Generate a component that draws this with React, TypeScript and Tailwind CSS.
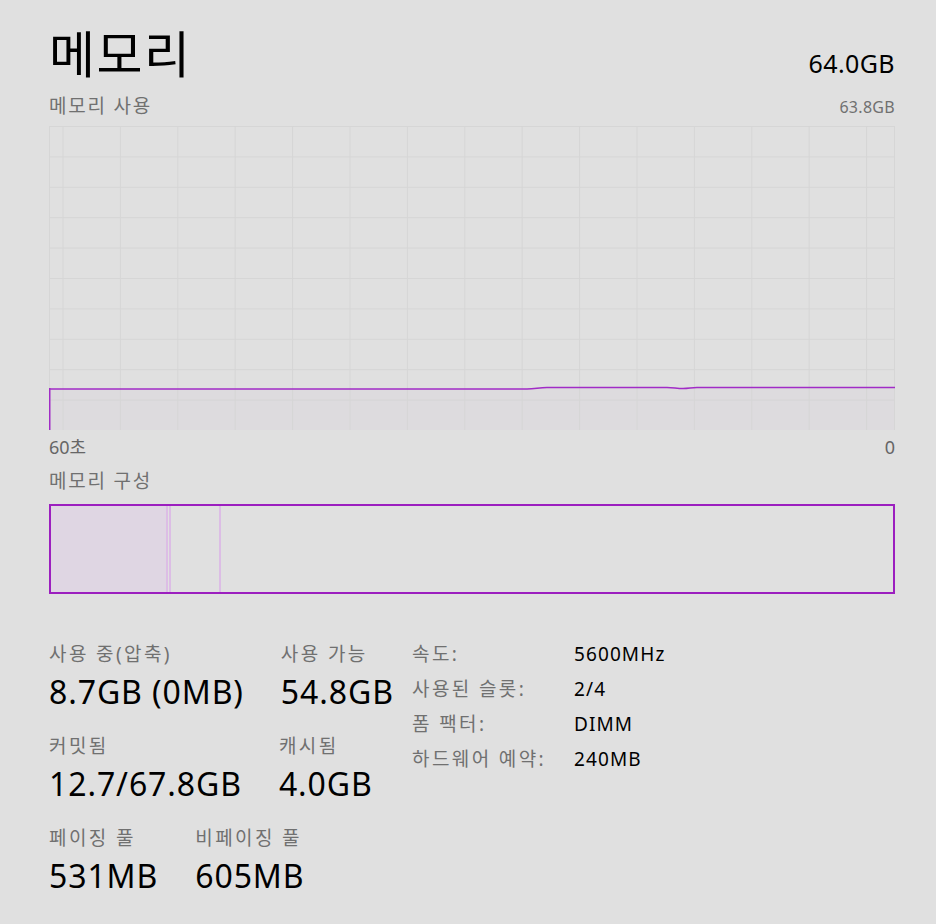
import React from "react";

const FONT = "font-['Noto_Sans','Noto_Sans_CJK_KR',sans-serif]";

function UsageChart() {
  const w = 846;
  const h = 304;
  const cols = Array.from({ length: 15 }, (_, i) => 14 + i * 57.4);
  const rows = Array.from({ length: 11 }, (_, i) => i * 30.4);
  const line =
    "M0.75 263 L478 263 C486 263 490 261.5 498 261.5 L618 261.5 C624 261.5 628 262.5 634 262.5 C640 262.5 642 261.5 648 261.5 L846 261.5";
  return (
    <svg width={w} height={h} viewBox={`0 0 ${w} ${h}`} className="block">
      <path d={`${line} L846 ${h} L0.75 ${h} Z`} fill="#dddbde" />
      {rows.map((y) => (
        <line key={`r${y}`} x1={0} x2={w} y1={y + 0.5} y2={y + 0.5} stroke="#d6d6d6" strokeWidth={1} />
      ))}
      {cols.map((x) => (
        <line key={`c${x}`} x1={x} x2={x} y1={0} y2={h} stroke="#d6d6d6" strokeWidth={1} />
      ))}
      <line x1={0.5} x2={0.5} y1={0} y2={263} stroke="#d6d6d6" strokeWidth={1} />
      <line x1={845.5} x2={845.5} y1={0} y2={h} stroke="#d6d6d6" strokeWidth={1} />
      <path d={line} fill="none" stroke="#a12cc6" strokeWidth={1.5} />
      <line x1={0.75} x2={0.75} y1={262} y2={h} stroke="#a12cc6" strokeWidth={1.5} />
    </svg>
  );
}

function Stat({ label, value }: { label: string; value: string }) {
  return (
    <div className="flex flex-col">
      <span className="text-[19px] leading-[24px] tracking-[2.4px] text-[#707070] whitespace-nowrap">{label}</span>
      <span className="mt-[6px] text-[32px] leading-[40px] tracking-[0.9px] text-black whitespace-nowrap">{value}</span>
    </div>
  );
}

export default function App() {
  const specs = [
    ["속도:", "5600MHz"],
    ["사용된 슬롯:", "2/4"],
    ["폼 팩터:", "DIMM"],
    ["하드웨어 예약:", "240MB"],
  ];

  return (
    <div className={`w-[936px] h-[924px] bg-[#e0e0e0] pl-[49px] pr-[41px] pt-[24px] ${FONT}`}>
      <div className="flex items-baseline justify-between h-[62px]">
        <span className="text-[50px] leading-[60px] tracking-[1.5px] text-black">메모리</span>
        <span className="text-[25px] tracking-[0.4px] text-black">64.0GB</span>
      </div>
      <div className="flex items-baseline justify-between h-[40px] pt-[6px]">
        <span className="text-[19px] leading-[28px] tracking-[1.8px] text-[#707070]">메모리 사용</span>
        <span className="text-[16px] tracking-[0.3px] text-[#707070]">63.8GB</span>
      </div>
      <UsageChart />
      <div className="flex justify-between h-[38px] pt-[5px] text-[18px] leading-[24px] text-[#666]">
        <span>60초</span>
        <span>0</span>
      </div>
      <div className="h-[36px] text-[19px] leading-[26px] tracking-[1.8px] text-[#707070]">메모리 구성</div>
      <div className="flex h-[90px] border-2 border-[#9c1fbf]">
        <div className="w-[115px] bg-[#dfd6e3]" />
        <div className="w-[2px] bg-[#dcbde5]" />
        <div className="w-[1px]" />
        <div className="w-[2px] bg-[#dcbde5]" />
        <div className="w-[48px]" />
        <div className="w-[2px] bg-[#dcbde5]" />
      </div>
      <div className="flex mt-[48px]">
        <div className="w-[363px] flex-none flex flex-col gap-[22px]">
          <div className="flex gap-[37px]">
            <Stat label="사용 중(압축)" value="8.7GB (0MB)" />
            <Stat label="사용 가능" value="54.8GB" />
          </div>
          <div className="flex gap-[37px]">
            <Stat label="커밋됨" value="12.7/67.8GB" />
            <Stat label="캐시됨" value="4.0GB" />
          </div>
          <div className="flex gap-[37px]">
            <Stat label="페이징 풀" value="531MB" />
            <Stat label="비페이징 풀" value="605MB" />
          </div>
        </div>
        <div className="flex flex-col -mt-[5px]">
          {specs.map(([k, v]) => (
            <div key={k} className="flex h-[35px] items-center">
              <span className="w-[162px] text-[19px] tracking-[2.4px] text-[#707070] whitespace-nowrap">{k}</span>
              <span className="text-[19px] tracking-[1.1px] text-black">{v}</span>
            </div>
          ))}
        </div>
      </div>
    </div>
  );
}
